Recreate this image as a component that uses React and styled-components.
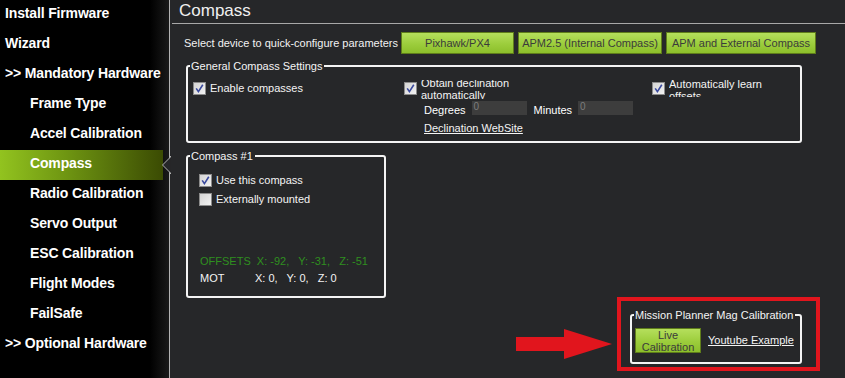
import React from "react";
import styled, { createGlobalStyle } from "styled-components";

const GlobalStyle = createGlobalStyle`
    html, body {
        margin: 0;
        padding: 0;
        background: #262729;
        overflow: hidden;
    }
    body {
        font-family: "Liberation Sans", Arial, sans-serif;
    }
`;

const Page = styled.div`
    display: flex;
    width: 845px;
    height: 378px;
`;

const Sidebar = styled.div`
    width: 169px;
    flex: none;
    border-right: 1px solid #b4b4b4;
    background: linear-gradient(to right, #000 0px, #000 150px, #1a1a1a 169px);
    display: flex;
    flex-direction: column;
`;

const NavItem = styled.div`
    position: relative;
    height: 30px;
    line-height: 27px;
    padding-left: ${(p) => (p.$sub ? 30 : 5)}px;
    margin-right: 6px;
    color: #fff;
    font-weight: bold;
    font-size: 14px;
    letter-spacing: -0.15px;
    white-space: nowrap;
    background: ${(p) =>
        p.$active ? "linear-gradient(to right, #92c31f 0%, #6f9612 40%, #3b4b03 100%)" : "transparent"};
`;

const Notch = styled.svg`
    position: absolute;
    right: -8px;
    top: 6px;
`;

const Main = styled.div`
    flex: 1;
    display: flex;
    flex-direction: column;
    color: #fff;
    font-size: 11px;
    line-height: 13px;
`;

const Header = styled.div`
    margin-left: 2px;
    height: 23px;
    padding-left: 7px;
    border-bottom: 1px solid #a8a8a8;
    font-size: 17px;
    line-height: 22px;
    color: #f0f0f0;
`;

const QuickRow = styled.div`
    display: flex;
    align-items: center;
    margin-top: 8px;
    margin-left: 14px;
    height: 22px;
`;

const QuickLabel = styled.div`
    width: 217px;
    overflow: hidden;
    white-space: nowrap;
    color: #f2f2f2;
    font-size: 11px;
`;

const GreenButton = styled.div`
    height: ${(p) => p.$h || 22}px;
    width: ${(p) => p.$w}px;
    flex: none;
    box-sizing: border-box;
    margin-right: 4px;
    border: 1px solid #5f7d1a;
    background: linear-gradient(to bottom, #b5df5c 0%, #9ccd3c 55%, #8cbf2b 100%);
    color: #3b3b3b;
    font-size: 11px;
    display: flex;
    align-items: center;
    justify-content: center;
    text-align: center;
    line-height: 12px;
    white-space: nowrap;
`;

const Group = styled.fieldset`
    margin: ${(p) => p.$m || 0};
    width: ${(p) => p.$w}px;
    height: ${(p) => p.$h}px;
    box-sizing: border-box;
    border: 2px solid #f4f4f4;
    border-radius: 3px;
    padding: 0;
`;

const Legend = styled.legend`
    padding: 0 2px 0 1px;
    margin-left: 2px;
    font-size: 11px;
    line-height: 14px;
    color: #f4f4f4;
    white-space: nowrap;
`;

const GeneralGrid = styled.div`
    display: grid;
    grid-template-columns: 211px 248px 1fr;
    padding: 6px 0 0 5px;
`;

const Col = styled.div`
    display: flex;
    flex-direction: column;
    padding: ${(p) => p.$pad || 0};
`;

const CheckRow = styled.div`
    display: flex;
    align-items: center;
    height: 19px;
    color: #f4f4f4;
    white-space: nowrap;
`;

const Box = styled.span`
    width: 13px;
    height: 13px;
    flex: none;
    box-sizing: border-box;
    margin-right: 4px;
    border: 1px solid #8c8c8c;
    background: linear-gradient(135deg, #d4d4d4 0%, #f2f2f2 100%);
    display: flex;
    align-items: center;
    justify-content: center;
`;

const Clipped = styled.div`
    height: ${(p) => p.$h}px;
    overflow: hidden;
    line-height: 12px;
    align-self: flex-start;
    margin-top: ${(p) => p.$top}px;
    & > div {
        margin-top: ${(p) => p.$shift}px;
    }
`;

const FieldRow = styled.div`
    display: flex;
    align-items: center;
    margin-left: 20px;
    height: 20px;
    &:first-of-type {
        margin-top: 3px;
    }
`;

const Label = styled.span`
    margin-right: 6px;
    margin-top: 4px;
`;

const TextInput = styled.div`
    width: 55px;
    height: 14px;
    background: #3d3d3d;
    color: #7c7c7c;
    font-size: 10px;
    line-height: 12px;
    padding-left: 2px;
    box-sizing: border-box;
    margin-right: 7px;
`;

const Link = styled.span`
    text-decoration: underline;
    color: #f4f4f4;
    margin-left: ${(p) => p.$ml || 0}px;
    white-space: nowrap;
`;

const BottomRow = styled.div`
    display: flex;
    align-items: flex-start;
`;

const Spacer = styled.div`
    height: ${(p) => p.$h}px;
`;

const StatLine = styled.div`
    display: flex;
    margin-left: 12px;
    height: 17px;
    line-height: 17px;
    color: ${(p) => p.$color || "#f4f4f4"};
    white-space: pre;
`;

const StatKey = styled.span`
    width: 55px;
`;

const Cluster = styled.div`
    display: flex;
    align-items: center;
    margin-left: auto;
    margin-right: 25px;
    margin-top: 154px;
`;

const Arrow = styled.svg`
    margin-top: 20px;
`;

const RedFrame = styled.div`
    width: 203px;
    height: 74px;
    box-sizing: border-box;
    border: 4px solid #e1151d;
    padding: 7px 0 0 9px;
    margin-left: 5px;
`;

const CalRow = styled.div`
    display: flex;
    align-items: center;
    padding: 6px 0 0 3px;
`;

const Check = ({ on }) => (
    <Box>
        {on && (
            <svg width="9" height="9" viewBox="0 0 9 9">
                <path d="M1.2 4.4 L3.4 7.6 L7.8 0.8" fill="none" stroke="#3a4a9e" strokeWidth="1.6" />
            </svg>
        )}
    </Box>
);

const navItems = [
    { label: "Install Firmware" },
    { label: "Wizard" },
    { label: ">> Mandatory Hardware" },
    { label: "Frame Type", sub: true },
    { label: "Accel Calibration", sub: true },
    { label: "Compass", sub: true, active: true },
    { label: "Radio Calibration", sub: true },
    { label: "Servo Output", sub: true },
    { label: "ESC Calibration", sub: true },
    { label: "Flight Modes", sub: true },
    { label: "FailSafe", sub: true },
    { label: ">> Optional Hardware" },
];

export default function App() {
    return (
        <Page>
            <GlobalStyle />
            <Sidebar>
                {navItems.map((item) => (
                    <NavItem key={item.label} $sub={item.sub} $active={item.active}>
                        {item.label}
                        {item.active && (
                            <Notch width="10" height="18" viewBox="0 0 10 18">
                                <path d="M9.5 0 L9.5 1 L1.5 9 L9.5 17 L9.5 18" fill="#262729" stroke="#b4b4b4" strokeWidth="1" />
                            </Notch>
                        )}
                    </NavItem>
                ))}
            </Sidebar>
            <Main>
                <Header>Compass</Header>
                <QuickRow>
                    <QuickLabel>Select device to quick-configure parameters</QuickLabel>
                    <GreenButton $w={113}>Pixhawk/PX4</GreenButton>
                    <GreenButton $w={144}>APM2.5 (Internal Compass)</GreenButton>
                    <GreenButton $w={150}>APM and External Compass</GreenButton>
                </QuickRow>

                <Group $w={616} $h={84} $m="5px 0 0 16px">
                    <Legend>General Compass Settings</Legend>
                    <GeneralGrid>
                        <Col>
                            <CheckRow>
                                <Check on />
                                Enable compasses
                            </CheckRow>
                        </Col>
                        <Col>
                            <CheckRow>
                                <Check on />
                                <Clipped $h={19} $top={1} $shift={-3}>
                                    <div>
                                        Obtain declination
                                        <br />
                                        automatically
                                    </div>
                                </Clipped>
                            </CheckRow>
                            <FieldRow>
                                <Label>Degrees</Label>
                                <TextInput>0</TextInput>
                                <Label>Minutes</Label>
                                <TextInput>0</TextInput>
                            </FieldRow>
                            <FieldRow>
                                <Link>Declination WebSite</Link>
                            </FieldRow>
                        </Col>
                        <Col>
                            <CheckRow>
                                <Check on />
                                <Clipped $h={20} $top={-2} $shift={1}>
                                    <div>
                                        Automatically learn
                                        <br />
                                        offsets
                                    </div>
                                </Clipped>
                            </CheckRow>
                        </Col>
                    </GeneralGrid>
                </Group>

                <BottomRow>
                    <Group $w={200} $h={149} $m="6px 0 0 16px">
                        <Legend>Compass #1</Legend>
                        <Col $pad="8px 0 0 11px">
                            <CheckRow>
                                <Check on />
                                Use this compass
                            </CheckRow>
                            <CheckRow>
                                <Check />
                                Externally mounted
                            </CheckRow>
                        </Col>
                        <Spacer $h={44} />
                        <StatLine $color="#2f8f1f">{"OFFSETS  X: -92,   Y: -31,   Z: -51"}</StatLine>
                        <StatLine>
                            <StatKey>MOT</StatKey>
                            {"X: 0,   Y: 0,   Z: 0"}
                        </StatLine>
                    </Group>

                    <Cluster>
                        <Arrow width="96" height="30" viewBox="0 0 96 30">
                            <polygon points="0,8 48,8 48,0 96,15 48,30 48,22 0,22" fill="#e1151d" />
                        </Arrow>
                        <RedFrame>
                            <Group $w={172} $h={56}>
                                <Legend>Mission Planner Mag Calibration</Legend>
                                <CalRow>
                                    <GreenButton $w={66} $h={25}>
                                        Live
                                        <br />
                                        Calibration
                                    </GreenButton>
                                    <Link $ml={3}>Youtube Example</Link>
                                </CalRow>
                            </Group>
                        </RedFrame>
                    </Cluster>
                </BottomRow>
            </Main>
        </Page>
    );
}
